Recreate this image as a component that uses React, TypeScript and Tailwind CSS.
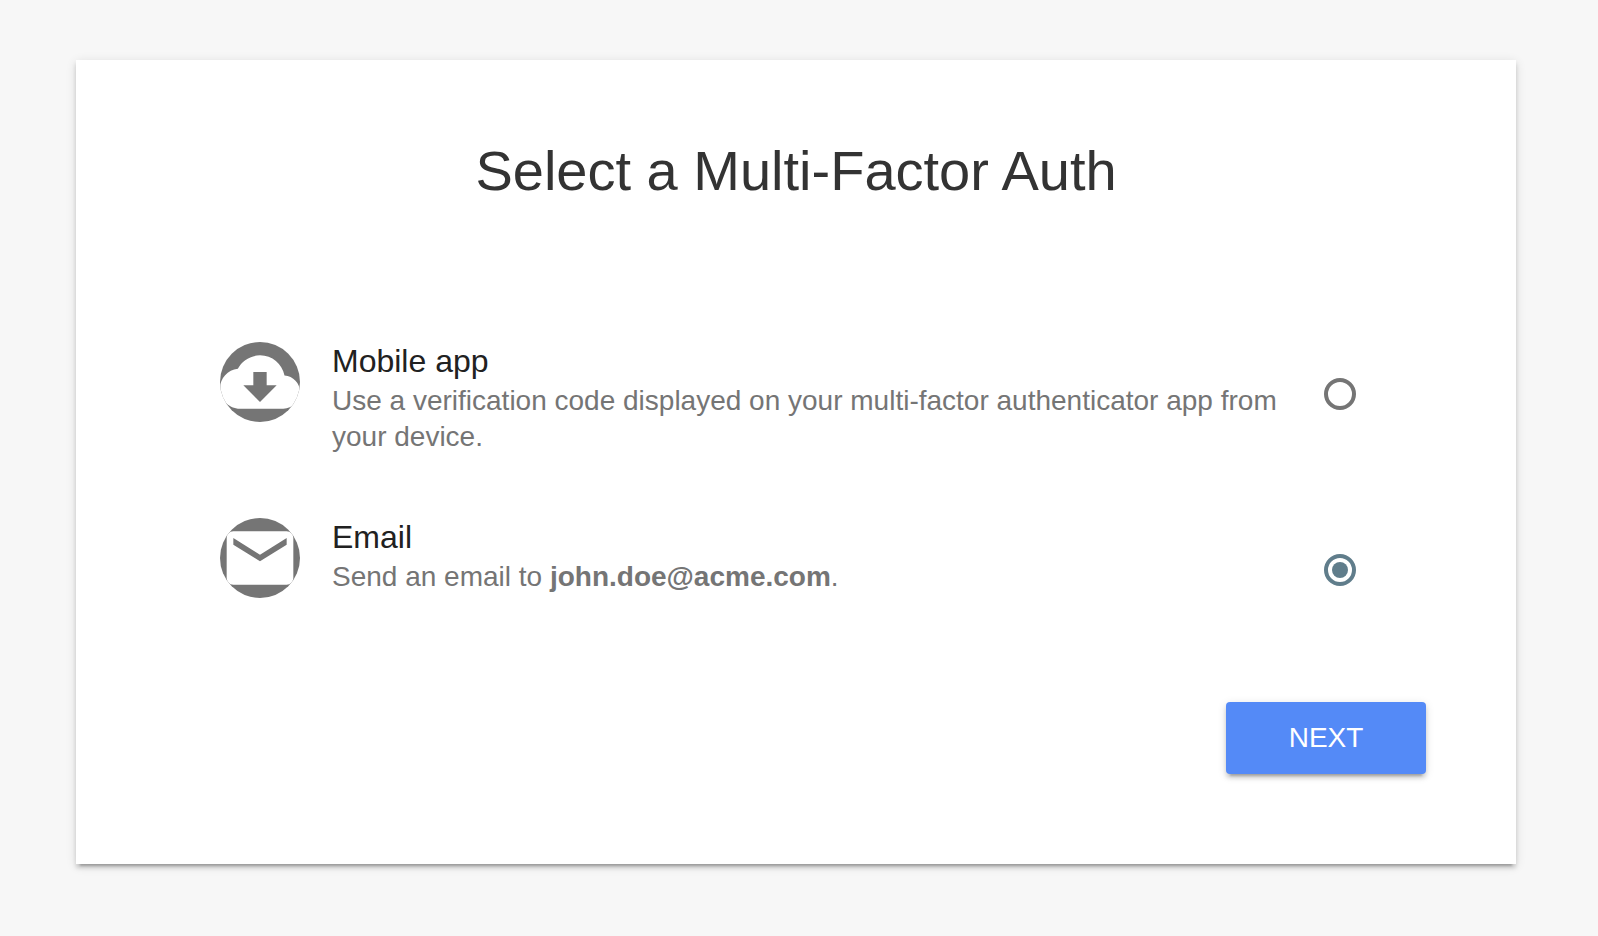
import { useState, type ReactNode } from 'react';

type OptionProps = {
  id: string;
  title: string;
  icon: string;
  checked: boolean;
  onSelect: () => void;
  children: ReactNode;
};

const CLOUD_DOWNLOAD =
  'M19.35 10.04C18.67 6.59 15.64 4 12 4 9.11 4 6.6 5.64 5.35 8.04 2.34 8.36 0 10.91 0 14c0 3.31 2.69 6 6 6h13c2.76 0 5-2.24 5-5 0-2.64-2.05-4.78-4.65-4.96zM17 13l-5 5-5-5h3V9h4v4h3z';
const MAIL =
  'M20 4H4c-1.1 0-1.99.9-1.99 2L2 18c0 1.1.9 2 2 2h16c1.1 0 2-.9 2-2V6c0-1.1-.9-2-2-2zm0 4l-8 5-8-5V6l8 5 8-5v2z';

function Option({ id, title, icon, checked, onSelect, children }: OptionProps) {
  return (
    <li className="flex min-h-36 items-start gap-8">
      <span className="size-20 shrink-0 overflow-hidden rounded-full bg-[#757575]">
        <svg viewBox="0 0 24 24" className="size-20 fill-white" aria-hidden="true">
          <path d={icon} />
        </svg>
      </span>
      <label htmlFor={id} className="min-w-0 flex-1 cursor-pointer">
        <span className="mb-[3px] block text-[32px] leading-[38px] text-[#212121]">{title}</span>
        <span className="block text-[28px] leading-9 text-[#757575]">{children}</span>
      </label>
      <input
        id={id}
        type="radio"
        name="factor"
        checked={checked}
        onChange={onSelect}
        className="mt-9 size-8 shrink-0 cursor-pointer appearance-none rounded-full border-4 border-[#757575] bg-white bg-clip-content p-1 checked:border-[#607d8b] checked:bg-[#607d8b]"
      />
    </li>
  );
}

export default function App() {
  const [factor, setFactor] = useState('email');

  return (
    <div className="min-h-screen bg-[#f7f7f7] pt-[60px] pr-[82px] pb-[72px] pl-[76px] font-['Liberation_Sans',Arial,sans-serif]">
      <main className="bg-white px-[90px] pt-20 pb-[90px] shadow-[0_6px_2px_-4px_rgba(0,0,0,0.2),0_4px_4px_0_rgba(0,0,0,0.14),0_2px_10px_0_rgba(0,0,0,0.12)]">
        <h1 className="text-center text-[56px] leading-[62px] text-[#333333]">
          Select a Multi-Factor Auth
        </h1>
        <form onSubmit={(event) => event.preventDefault()}>
          <ul className="mt-[140px] flex flex-col gap-8 pr-[70px] pl-[54px]">
            <Option
              id="factor-app"
              title="Mobile app"
              icon={CLOUD_DOWNLOAD}
              checked={factor === 'app'}
              onSelect={() => setFactor('app')}
            >
              Use a verification code displayed on your multi-factor authenticator app from your
              device.
            </Option>
            <Option
              id="factor-email"
              title="Email"
              icon={MAIL}
              checked={factor === 'email'}
              onSelect={() => setFactor('email')}
            >
              Send an email to <strong className="font-bold">john.doe@acme.com</strong>.
            </Option>
          </ul>
          <div className="mt-10 flex justify-end">
            <button
              type="submit"
              className="h-[72px] min-w-[200px] cursor-pointer rounded bg-[#548af7] px-8 text-[28px] leading-9 text-white shadow-[0_6px_2px_-4px_rgba(0,0,0,0.2),0_4px_4px_0_rgba(0,0,0,0.14),0_2px_10px_0_rgba(0,0,0,0.12)]"
            >
              NEXT
            </button>
          </div>
        </form>
      </main>
    </div>
  );
}
